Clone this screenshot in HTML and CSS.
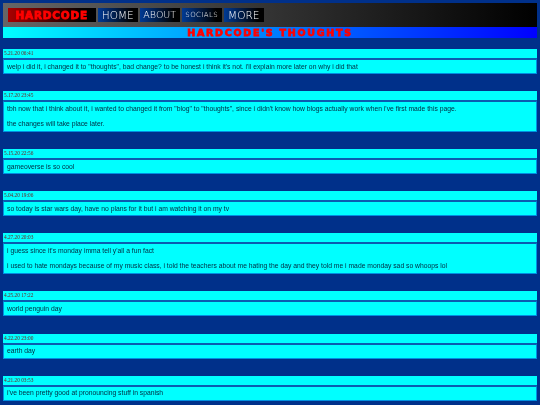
FILE: index.html
```html
<!DOCTYPE html>
<html lang="en">
<head>
<meta charset="utf-8">
<title>Hardcode's Thoughts</title>
<link rel="stylesheet" href="styles.css">
</head>
<body>
<header class="topbar">
  <a class="logo">HARDCODE</a>
  <nav class="nav">
    <a class="nav-item nav-home">HOME</a>
    <a class="nav-item nav-about">ABOUT</a>
    <a class="nav-item nav-socials">SOCIALS</a>
    <a class="nav-item nav-more">MORE</a>
  </nav>
</header>
<h1 class="title">HARDCODE'S THOUGHTS</h1>
<main class="posts">
  <article class="post">
    <time class="date">5.21.20 06:41</time>
    <div class="body"><p>welp i did it, i changed it to "thoughts", bad change? to be honest i think it's not. i'll explain more later on why i did that</p></div>
  </article>
  <article class="post">
    <time class="date">5.17.20 23:45</time>
    <div class="body"><p>tbh now that i think about it, i wanted to changed it from "blog" to "thoughts", since i didn't know how blogs actually work when i've first made this page.</p><p>the changes will take place later.</p></div>
  </article>
  <article class="post">
    <time class="date">5.15.20 22:56</time>
    <div class="body"><p>gameoverse is so cool</p></div>
  </article>
  <article class="post">
    <time class="date">5.04.20 19:06</time>
    <div class="body"><p>so today is star wars day, have no plans for it but i am watching it on my tv</p></div>
  </article>
  <article class="post">
    <time class="date">4.27.20 20:03</time>
    <div class="body"><p>i guess since it's monday imma tell y'all a fun fact</p><p>i used to hate mondays because of my music class, i told the teachers about me hating the day and they told me i made monday sad so whoops lol</p></div>
  </article>
  <article class="post">
    <time class="date">4.25.20 17:22</time>
    <div class="body"><p>world penguin day</p></div>
  </article>
  <article class="post">
    <time class="date">4.22.20 23:00</time>
    <div class="body"><p>earth day</p></div>
  </article>
  <article class="post">
    <time class="date">4.21.20 03:53</time>
    <div class="body"><p>i've been pretty good at pronouncing stuff in spanish</p></div>
  </article>
</main>
</body>
</html>
```
FILE: styles.css
```css
html { background: #00308a; height: 405px; overflow: hidden; }
body {
  margin: 0;
  height: 405px;
  overflow: hidden;
  padding: 3px 3px 0;
  font-family: "Liberation Sans", Arial, sans-serif;
  box-sizing: border-box;
  filter: blur(0.3px);
}
.topbar {
  height: 23.5px;
  display: flex;
  align-items: flex-start;
  padding: 5px 0 0 4.5px;
  gap: 1.5px;
  background: linear-gradient(to right, #666 0%, #000 100%);
  box-sizing: border-box;
}
.logo {
  width: 88.5px;
  height: 14px;
  background: linear-gradient(to right, #a00 0%, #000 85%);
  color: #f00;
  font: bold 10.5px/15px "DejaVu Sans", sans-serif;
  letter-spacing: 0.8px;
  text-align: center;
  -webkit-text-stroke: 0.8px #f00;
}
.nav { display: flex; gap: 1.5px; }
.nav-item {
  width: 40.5px;
  height: 14px;
  display: flex;
  align-items: center;
  justify-content: center;
  background: linear-gradient(to right, #003a94 0%, #000 85%);
  color: #fff;
  font: 200 10.5px/14px "DejaVu Sans", sans-serif;
}
.nav-about { font-size: 9.5px; }
.nav-socials { font-size: 7px; letter-spacing: 0.4px; }
.title {
  margin: 0;
  height: 11.5px;
  background: linear-gradient(to right, #0ff 0%, #00f 100%);
  color: #f00;
  font: bold 9.5px/12px "DejaVu Sans", sans-serif;
  letter-spacing: 1.75px;
  text-align: center;
  -webkit-text-stroke: 0.8px #f00;
}
.posts { display: flex; flex-direction: column; margin-top: 11px; }
.post { display: flex; flex-direction: column; margin-bottom: 17.1px; }
.date {
  display: block;
  height: 9px;
  background: #0ff;
  border-bottom: 1px solid #0a5cb0;
  color: #702020;
  font: 5.3px/9px "Liberation Serif", serif;
  padding-left: 1px;
}
.body {
  background: #0ff;
  border: 1px solid #0090e0;
  border-top-color: #0a5cb0;
  padding-left: 3px;
  color: #002a40;
  font-size: 6.77px;
}
.body p { margin: 2.5px 0; line-height: 8px; }
.body p + p { margin-top: 7.5px; margin-bottom: 3px; }
```
